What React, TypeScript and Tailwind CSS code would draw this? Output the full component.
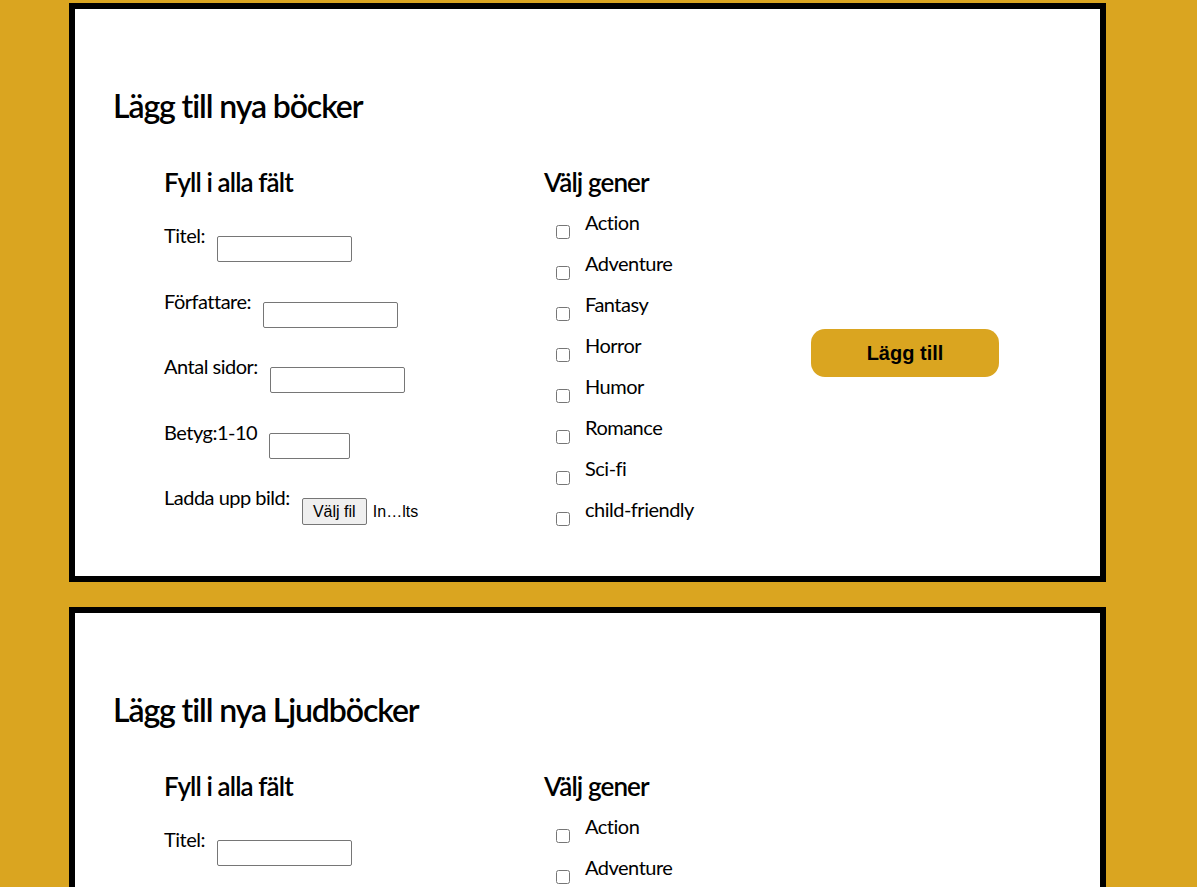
import React from 'react';

const genres = ['Action', 'Adventure', 'Fantasy', 'Horror', 'Humor', 'Romance', 'Sci-fi', 'child-friendly'];

const fields = [
  { label: 'Titel:', width: 'w-[135px]' },
  { label: 'Författare:', width: 'w-[135px]' },
  { label: 'Antal sidor:', width: 'w-[135px]' },
  { label: 'Betyg:1-10', width: 'w-[81px]' },
];

const AddForm: React.FC<{ title: string }> = ({ title }) => {
  return (
    <section className="ml-[69px] w-[1037px] border-[6px] border-black bg-white pl-[38px] pt-[77px] pb-[51px]">
      <h1 className="text-[32px] leading-[40px] font-semibold tracking-[-1.1px] text-black">{title}</h1>

      <div className="mt-[40px] ml-[51px] flex items-start">
        {/* fält */}
        <div className="w-[380px] flex flex-col">
          <h2 className="text-[26px] leading-[32px] font-semibold tracking-[-0.9px]">Fyll i alla fält</h2>
          <div className="mt-[25px] flex flex-col">
            {fields.map((f) => (
              <div key={f.label} className="h-[65.5px] flex items-start">
                <label className="text-[20px] leading-[24px] tracking-[-0.5px]">{f.label}</label>
                <input
                  type="text"
                  className={`ml-[12px] mt-[13px] h-[26px] ${f.width} border border-[#767676] rounded-[2px] bg-white`}
                />
              </div>
            ))}
            <div className="h-[40px] flex items-start">
              <label className="text-[20px] leading-[24px] tracking-[-0.5px]">Ladda upp bild:</label>
              <div className="ml-[12px] mt-[13px] flex items-center font-['Liberation_Sans',Arial,sans-serif] text-[16px]">
                <button className="h-[27px] w-[65px] border border-[#767676] rounded-[2px] bg-[#efefef] text-black">
                  Välj fil
                </button>
                <span className="ml-[6px]">In…lts</span>
              </div>
            </div>
          </div>
        </div>

        {/* gener */}
        <div className="w-[267px] flex flex-col">
          <h2 className="text-[26px] leading-[32px] font-semibold tracking-[-0.9px]">Välj gener</h2>
          <div className="mt-[12px] flex flex-col">
            {genres.map((g, i) => (
              <div key={g} className={`${i < genres.length - 1 ? 'h-[41px]' : 'h-[28px]'} flex items-start`}>
                <input type="checkbox" className="ml-[12px] mt-[15px] w-[14px] h-[14px] m-0" />
                <label className="ml-[15px] text-[20px] leading-[24px] tracking-[-0.5px]">{g}</label>
              </div>
            ))}
          </div>
        </div>

        <button className="mt-[163px] w-[188px] h-[48px] rounded-[14px] bg-[#daa520] font-['Liberation_Sans',Arial,sans-serif] font-bold text-[20px] text-black">
          Lägg till
        </button>
      </div>
    </section>
  );
};

export default function App() {
  return (
    <div className="min-h-screen bg-[#daa520] pt-[3px] pb-[25px] flex flex-col gap-[25px] font-['Lato',sans-serif] text-black">
      <AddForm title="Lägg till nya böcker" />
      <AddForm title="Lägg till nya Ljudböcker" />
    </div>
  );
}
